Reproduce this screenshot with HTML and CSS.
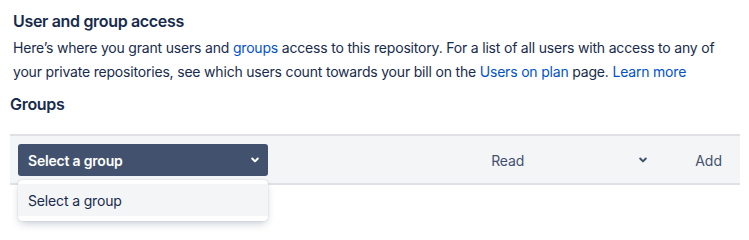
FILE: index.html
```html
<!DOCTYPE html>
<html lang="en">
<head>
<meta charset="utf-8">
<title>User and group access</title>
<link rel="stylesheet" href="styles.css">
</head>
<body>
<div class="page">
  <h2 class="title">User and group access</h2>
  <p class="desc">Here’s where you grant users and <a href="#" class="link">groups</a> access to this repository. For a list of all users with access to any of your private repositories, see which users count towards your bill on the <a href="#" class="link">Users on plan</a> page. <a href="#" class="link">Learn more</a></p>
  <h3 class="section">Groups</h3>
  <div class="bar">
    <div class="group-select">
      <div class="select-box">
        <span class="select-label">Select a group</span>
        <svg class="chev" width="10" height="10" viewBox="0 0 10 10"><path d="M2.2 3.5 L5 6.4 L7.8 3.5" fill="none" stroke="#fff" stroke-width="2" stroke-linecap="round" stroke-linejoin="round"/></svg>
      </div>
      <div class="menu">
        <div class="menu-item">Select a group</div>
      </div>
    </div>
    <div class="spacer"></div>
    <div class="perm-select">
      <span class="perm-label">Read</span>
      <svg class="chev" width="10" height="10" viewBox="0 0 10 10"><path d="M2.2 3.5 L5 6.4 L7.8 3.5" fill="none" stroke="#42526E" stroke-width="2" stroke-linecap="round" stroke-linejoin="round"/></svg>
    </div>
    <button class="add-btn">Add</button>
  </div>
</div>
</body>
</html>
```

FILE: styles.css
```css
* { box-sizing: border-box; }
html { margin: 0; padding: 0; background: #fff; min-height: 100%; }
body {
  margin: 0;
  padding: 0;
  min-height: 225px;
  font-family: Inter, "Noto Sans", "Liberation Sans", sans-serif;
  color: #172B4D;
  font-size: 14px;
}
.page {
  padding: 9px 9px 48px 10px;
}
.title {
  margin: 0 0 0 3px;
  font-size: 16px;
  line-height: 24px;
  font-weight: 600;
  letter-spacing: -0.33px;
}
.desc {
  margin: 3px 0 0 3px;
  font-size: 14px;
  line-height: 24px;
  letter-spacing: -0.19px;
}
.link { color: #0052CC; text-decoration: none; }
.section {
  margin: 8px 0 0 0;
  font-size: 16px;
  line-height: 24px;
  font-weight: 600;
  letter-spacing: -0.3px;
}
.bar {
  margin-top: 18px;
  display: flex;
  align-items: center;
  background: #F4F5F7;
  border-top: 2px solid #DFE1E6;
  border-bottom: 2px solid #DFE1E6;
  padding: 8px 6px 7px 8px;
}
.group-select {
  position: relative;
  width: 250px;
}
.select-box {
  height: 32px;
  background: #42526E;
  border-radius: 3px;
  display: flex;
  align-items: center;
  justify-content: space-between;
  padding: 0 8px 0 10px;
  color: #fff;
  font-weight: 600;
  letter-spacing: -0.2px;
}
.menu {
  position: absolute;
  z-index: 2;
  top: 36px;
  left: 0;
  right: 0;
  background: #fff;
  border-radius: 4px;
  padding: 4px 0 5px;
  box-shadow: 0 4px 8px -2px rgba(9,30,66,0.25), 0 0 1px rgba(9,30,66,0.31);
}
.menu-item {
  height: 32px;
  display: flex;
  align-items: center;
  padding: 0 10px;
  background: #F4F5F7;
  color: #172B4D;
  letter-spacing: -0.15px;
}
.spacer { flex: 1; }
.perm-select {
  width: 176px;
  height: 32px;
  display: flex;
  align-items: center;
  justify-content: space-between;
  padding: 0 5px 0 14px;
  color: #42526E;
  letter-spacing: -0.15px;
}
.add-btn {
  margin-left: 30px;
  height: 32px;
  border: 0;
  background: transparent;
  font: inherit;
  color: #42526E;
  padding: 0 12px;
}
.chev { display: block; }
```
